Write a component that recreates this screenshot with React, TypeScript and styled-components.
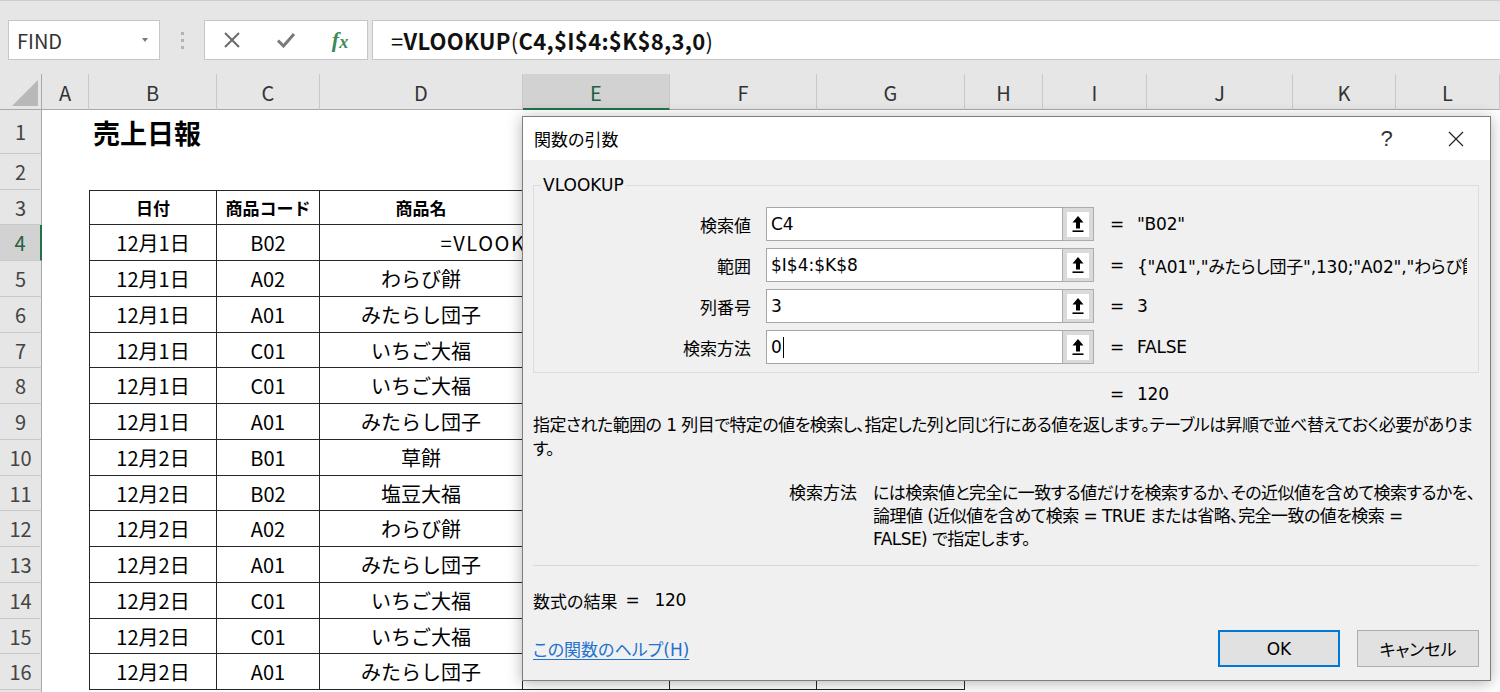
import React from 'react';
import styled, { createGlobalStyle, css } from 'styled-components';

const SHEET_FONT = `"Noto Sans CJK JP", "Noto Sans", sans-serif`;
const UI_FONT = `"DejaVu Sans", "Noto Sans CJK JP", sans-serif`;

const GlobalStyle = createGlobalStyle`
  html, body {
    margin: 0;
    padding: 0;
    background: #fff;
  }
  body {
    font-family: ${SHEET_FONT};
  }
`;

const COLS = [
  { key: 'A', w: 47 },
  { key: 'B', w: 128 },
  { key: 'C', w: 103 },
  { key: 'D', w: 203 },
  { key: 'E', w: 147 },
  { key: 'F', w: 147 },
  { key: 'G', w: 148 },
  { key: 'H', w: 78 },
  { key: 'I', w: 104 },
  { key: 'J', w: 146 },
  { key: 'K', w: 103 },
  { key: 'L', w: 104 },
];

const TEMPLATE = `42px ${COLS.map((c) => `${c.w}px`).join(' ')}`;

const SALES: [string, string, string][] = [
  ['12月1日', 'B02', ''],
  ['12月1日', 'A02', 'わらび餅'],
  ['12月1日', 'A01', 'みたらし団子'],
  ['12月1日', 'C01', 'いちご大福'],
  ['12月1日', 'C01', 'いちご大福'],
  ['12月1日', 'A01', 'みたらし団子'],
  ['12月2日', 'B01', '草餅'],
  ['12月2日', 'B02', '塩豆大福'],
  ['12月2日', 'A02', 'わらび餅'],
  ['12月2日', 'A01', 'みたらし団子'],
  ['12月2日', 'C01', 'いちご大福'],
  ['12月2日', 'C01', 'いちご大福'],
  ['12月2日', 'A01', 'みたらし団子'],
];

const FORMULA = '=VLOOKUP(C4,$I$4:$K$8,3,0)';

// row 1 is taller, rows 2..16 share the rest down to y=690
const rowHeight = (n: number) => {
  if (n === 1) return 44;
  if (n === 17) return 20;
  const top = (k: number) => Math.round(154 + (k * 536) / 15);
  return top(n - 1) - top(n - 2);
};

const Page = styled.div`
  position: relative;
  width: 1500px;
  height: 692px;
  overflow: hidden;
  background: #fff;
  font-family: ${SHEET_FONT};
`;

/* ---------- formula bar ---------- */

const FormulaBand = styled.div`
  display: flex;
  align-items: flex-start;
  height: 74px;
  box-sizing: border-box;
  padding: 19px 0 0 8px;
  background: #e6e6e6;
  border-top: 1px solid #cdcdcd;
`;

const NameBox = styled.div`
  display: flex;
  align-items: center;
  justify-content: space-between;
  width: 152px;
  height: 40px;
  box-sizing: border-box;
  padding: 0 11px 0 8px;
  background: #fff;
  border: 1px solid #c6c6c6;
  font-size: 20px;
  color: #333;
`;

const DropArrow = styled.span`
  width: 0;
  height: 0;
  border-left: 3.5px solid transparent;
  border-right: 3.5px solid transparent;
  border-top: 4px solid #7a7a7a;
`;

const Grip = styled.div`
  display: flex;
  flex-direction: column;
  align-items: center;
  justify-content: center;
  gap: 4px;
  width: 44px;
  height: 40px;

  span {
    width: 3px;
    height: 3px;
    background: #b3b3b3;
  }
`;

const ActionBox = styled.div`
  display: grid;
  grid-template-columns: repeat(3, 1fr);
  place-items: center;
  width: 164px;
  height: 40px;
  box-sizing: border-box;
  background: #fff;
  border: 1px solid #c6c6c6;
`;

const FxMark = styled.span`
  font-family: "Liberation Serif", serif;
  font-style: italic;
  font-weight: 700;
  font-size: 22px;
  color: #3b8a5a;

  sub {
    font-size: 18px;
    vertical-align: -1px;
  }
`;

const FormulaInput = styled.div`
  flex: 1;
  display: flex;
  align-items: center;
  height: 40px;
  margin-left: 4px;
  box-sizing: border-box;
  padding-left: 18px;
  background: #fff;
  border: 1px solid #c6c6c6;
  border-right: 0;
  font-size: 22px;
  font-weight: 700;
  letter-spacing: 0.3px;
  color: #111;

  span {
    font-weight: 400;
  }
`;

/* ---------- sheet ---------- */

const Sheet = styled.div`
  display: flex;
  flex-direction: column;
`;

const Row = styled.div<{ $h: number }>`
  display: grid;
  grid-template-columns: ${TEMPLATE};
  height: ${(p) => p.$h}px;
  flex: none;
`;

const Corner = styled.div`
  position: relative;
  background: #e6e6e6;
  border-right: 1px solid #a9a9a9;
  border-bottom: 1px solid #a9a9a9;
  box-sizing: border-box;
`;

const ColHead = styled.div<{ $active?: boolean }>`
  display: flex;
  align-items: center;
  justify-content: center;
  box-sizing: border-box;
  padding-top: 2px;
  font-size: 20px;
  color: ${(p) => (p.$active ? '#24603d' : '#333')};
  background: ${(p) => (p.$active ? '#d2d2d2' : '#e6e6e6')};
  border-right: 1px solid #c9c9c9;
  border-bottom: ${(p) => (p.$active ? '2px solid #217346' : '1px solid #a9a9a9')};
`;

const RowHead = styled.div<{ $active?: boolean }>`
  display: flex;
  align-items: center;
  justify-content: center;
  box-sizing: border-box;
  font-size: 20px;
  color: ${(p) => (p.$active ? '#24603d' : '#444')};
  background: ${(p) => (p.$active ? '#d2d2d2' : '#e6e6e6')};
  border-bottom: 1px solid #c9c9c9;
  border-right: ${(p) => (p.$active ? '2px solid #217346' : '1px solid #a9a9a9')};
`;

const LINE = '1px solid #262626';

const Cell = styled.div<{ $boxed?: boolean; $first?: boolean; $top?: boolean; $head?: boolean }>`
  display: flex;
  align-items: center;
  justify-content: center;
  min-width: 0;
  box-sizing: border-box;
  white-space: nowrap;
  font-size: ${(p) => (p.$head ? '17px' : '20px')};
  font-weight: ${(p) => (p.$head ? 700 : 400)};
  color: #000;
  ${(p) =>
    p.$boxed &&
    css`
      border-right: ${LINE};
      border-bottom: ${LINE};
    `}
  ${(p) => p.$first && css`border-left: ${LINE};`}
  ${(p) => p.$top && css`border-top: ${LINE};`}
`;

const TitleCell = styled.div`
  display: flex;
  align-items: center;
  padding-left: 4px;
  white-space: nowrap;
  font-size: 27px;
  font-weight: 700;
  color: #000;
`;

const EditText = styled.span`
  letter-spacing: 1.6px;
`;

/* ---------- dialog ---------- */

const Dialog = styled.section`
  position: absolute;
  left: 522px;
  top: 116px;
  width: 969px;
  height: 565px;
  box-sizing: border-box;
  display: flex;
  flex-direction: column;
  background: #f0f0f0;
  border: 1px solid #7e7e7e;
  box-shadow: 0 2px 14px rgba(0, 0, 0, 0.3);
  font-family: ${UI_FONT};
  font-feature-settings: "palt";
  font-size: 17px;
  color: #000;
`;

const TitleBar = styled.header`
  display: flex;
  align-items: center;
  height: 43px;
  flex: none;
  padding-left: 11px;
  background: #fff;
`;

const DialogTitle = styled.h1`
  flex: 1;
  margin: 0;
  font-size: 17px;
  font-weight: 400;
`;

const TitleButton = styled.button`
  display: flex;
  align-items: center;
  justify-content: center;
  width: 69px;
  height: 43px;
  padding: 0;
  border: 0;
  background: transparent;
  font-family: "Liberation Sans", sans-serif;
  font-size: 22px;
  color: #333;
`;

const Body = styled.div`
  display: flex;
  flex-direction: column;
  flex: 1;
  padding: 15px 11px 13px 10px;
`;

const ArgGroup = styled.fieldset`
  margin: 0;
  padding: 12px 0 8px;
  border: 1px solid #dcdcdc;
  min-inline-size: 0;
`;

const Legend = styled.legend`
  margin-left: 7px;
  padding: 0 2px;
  line-height: 20px;
  font-size: 17px;
`;

const ArgList = styled.div`
  display: flex;
  flex-direction: column;
  gap: 7px;
`;

const ArgRow = styled.div`
  display: flex;
  align-items: center;
  height: 34px;
`;

const ArgLabel = styled.label`
  flex: none;
  width: 217px;
  margin-right: 15px;
  text-align: right;
`;

const ArgInput = styled.div`
  display: flex;
  align-items: center;
  flex: none;
  width: 296px;
  height: 34px;
  box-sizing: border-box;
  padding-left: 4px;
  background: #fff;
  border: 1px solid #a6a6a6;
  border-right: 0;
`;

const Caret = styled.span`
  display: inline-block;
  width: 1px;
  height: 21px;
  margin-left: 1px;
  background: #000;
`;

const RefButton = styled.span`
  display: flex;
  align-items: center;
  justify-content: center;
  flex: none;
  width: 32px;
  height: 34px;
  box-sizing: border-box;
  background: #dadada;
  border: 1px solid #acacac;

  i {
    display: flex;
    align-items: center;
    justify-content: center;
    width: 22px;
    height: 25px;
    background: #fff;
  }
`;

const Equals = styled.span<{ $gap?: number }>`
  flex: none;
  width: 12px;
  margin-left: ${(p) => p.$gap ?? 16}px;
`;

const ArgValue = styled.span<{ $gap?: number }>`
  flex: none;
  width: 330px;
  margin-left: ${(p) => p.$gap ?? 15}px;
  overflow: hidden;
  white-space: nowrap;
  letter-spacing: -0.2px;
`;

const ResultRow = styled.div`
  display: flex;
  align-items: center;
  height: 24px;
  margin-top: 9px;
  padding-left: 561px;
`;

const Description = styled.p`
  margin: 7px 0 0;
  line-height: 24px;
  white-space: nowrap;
  letter-spacing: -0.55px;
`;

const ArgHelp = styled.div`
  display: flex;
  margin-top: 21px;
  line-height: 23px;
  white-space: nowrap;
`;

const ArgHelpName = styled.span`
  flex: none;
  width: 324px;
  margin-right: 16px;
  text-align: right;
`;

const ArgHelpText = styled.span`
  letter-spacing: -0.55px;
`;

const Separator = styled.hr`
  margin: 14px 0 0;
  border: 0;
  border-top: 1px solid #d9d9d9;
`;

const FormulaResult = styled.div`
  display: flex;
  align-items: center;
  height: 24px;
  margin-top: 22px;
`;

const Footer = styled.div`
  display: flex;
  align-items: center;
  justify-content: space-between;
  margin-top: 18px;
`;

const HelpLink = styled.a`
  color: #1f72cf;
  text-decoration: underline;
  text-underline-offset: 3px;
`;

const ButtonGroup = styled.div`
  display: flex;
  gap: 17px;
`;

const DialogButton = styled.button<{ $default?: boolean }>`
  width: 122px;
  height: 37px;
  padding: 0;
  box-sizing: border-box;
  background: #e1e1e1;
  border: ${(p) => (p.$default ? '2px solid #0078d7' : '1px solid #adadad')};
  font: inherit;
  color: #000;
`;

const RefIcon = () => (
  <svg width="12" height="18" viewBox="0 0 12 18">
    <path d="M6 1 L11.5 7.5 H8 V13.5 H4 V7.5 H0.5 Z" fill="#000" />
    <rect x="0.5" y="15.4" width="11" height="1.6" fill="#000" />
  </svg>
);

const ARGS: { label: string; value: React.ReactNode; result: string }[] = [
  { label: '検索値', value: 'C4', result: '"B02"' },
  { label: '範囲', value: '$I$4:$K$8', result: '{"A01","みたらし団子",130;"A02","わらび餅"' },
  { label: '列番号', value: '3', result: '3' },
  {
    label: '検索方法',
    value: (
      <>
        0<Caret />
      </>
    ),
    result: 'FALSE',
  },
];

const FunctionArgumentsDialog = () => (
  <Dialog>
    <TitleBar>
      <DialogTitle>関数の引数</DialogTitle>
      <TitleButton>?</TitleButton>
      <TitleButton>
        <svg width="16" height="16" viewBox="0 0 16 16">
          <path d="M1 1 L15 15 M15 1 L1 15" stroke="#222" strokeWidth="1.2" />
        </svg>
      </TitleButton>
    </TitleBar>
    <Body>
      <ArgGroup>
        <Legend>VLOOKUP</Legend>
        <ArgList>
          {ARGS.map((a) => (
            <ArgRow key={a.label}>
              <ArgLabel>{a.label}</ArgLabel>
              <ArgInput>{a.value}</ArgInput>
              <RefButton>
                <i>
                  <RefIcon />
                </i>
              </RefButton>
              <Equals>=</Equals>
              <ArgValue>{a.result}</ArgValue>
            </ArgRow>
          ))}
        </ArgList>
      </ArgGroup>
      <ResultRow>
        <Equals>=</Equals>
        <ArgValue>120</ArgValue>
      </ResultRow>
      <Description>
        指定された範囲の 1 列目で特定の値を検索し、指定した列と同じ行にある値を返します。テーブルは昇順で並べ替えておく必要がありま
        <br />
        す。
      </Description>
      <ArgHelp>
        <ArgHelpName>検索方法</ArgHelpName>
        <ArgHelpText>
          には検索値と完全に一致する値だけを検索するか、その近似値を含めて検索するかを、
          <br />
          論理値 (近似値を含めて検索 = TRUE または省略、完全一致の値を検索 =
          <br />
          FALSE) で指定します。
        </ArgHelpText>
      </ArgHelp>
      <Separator />
      <FormulaResult>
        数式の結果
        <Equals $gap={8}>=</Equals>
        <ArgValue $gap={17}>120</ArgValue>
      </FormulaResult>
      <Footer>
        <HelpLink>この関数のヘルプ(H)</HelpLink>
        <ButtonGroup>
          <DialogButton $default>OK</DialogButton>
          <DialogButton>キャンセル</DialogButton>
        </ButtonGroup>
      </Footer>
    </Body>
  </Dialog>
);

const cellContent = (n: number, key: string): React.ReactNode => {
  if (n === 3) {
    return { B: '日付', C: '商品コード', D: '商品名' }[key as 'B' | 'C' | 'D'] ?? '';
  }
  if (n === 4 && key === 'E') return <EditText>{FORMULA}</EditText>;
  const sale = SALES[n - 4];
  if (!sale) return '';
  return { B: sale[0], C: sale[1], D: sale[2] }[key as 'B' | 'C' | 'D'] ?? '';
};

const App = () => {
  const rows = Array.from({ length: 17 }, (_, i) => i + 1);
  return (
    <Page>
      <GlobalStyle />
      <FormulaBand>
        <NameBox>
          FIND
          <DropArrow />
        </NameBox>
        <Grip>
          <span />
          <span />
          <span />
        </Grip>
        <ActionBox>
          <svg width="18" height="18" viewBox="0 0 18 18">
            <path d="M2 2 L16 16 M16 2 L2 16" stroke="#6b6b6b" strokeWidth="2" />
          </svg>
          <svg width="20" height="16" viewBox="0 0 20 16">
            <path d="M2 8.5 L7.5 14 L18 2" stroke="#7a7a7a" strokeWidth="3" fill="none" />
          </svg>
          <FxMark>
            f<sub>x</sub>
          </FxMark>
        </ActionBox>
        <FormulaInput>
          <span>=</span>VLOOKUP<span>(</span>C4,$I$4:$K$8,3,0<span>)</span>
        </FormulaInput>
      </FormulaBand>

      <Sheet>
        <Row $h={36}>
          <Corner>
            <svg width="42" height="36" viewBox="0 0 42 36" style={{ position: 'absolute', inset: 0 }}>
              <polygon points="38,6 38,32 12,32" fill="#b8b8b8" />
            </svg>
          </Corner>
          {COLS.map((c) => (
            <ColHead key={c.key} $active={c.key === 'E'}>
              {c.key}
            </ColHead>
          ))}
        </Row>
        {rows.map((n) => (
          <Row key={n} $h={rowHeight(n)}>
            <RowHead $active={n === 4}>{n < 17 ? n : ''}</RowHead>
            {COLS.map((c, i) => {
              if (n === 1 && c.key === 'B') return <TitleCell key={c.key}>売上日報</TitleCell>;
              const boxed = n >= 3 && n <= 16 && i >= 1 && i <= 6;
              return (
                <Cell
                  key={c.key}
                  $boxed={boxed}
                  $first={boxed && i === 1}
                  $top={boxed && n === 3}
                  $head={n === 3}
                >
                  {cellContent(n, c.key)}
                </Cell>
              );
            })}
          </Row>
        ))}
      </Sheet>

      <FunctionArgumentsDialog />
    </Page>
  );
};

export default App;
